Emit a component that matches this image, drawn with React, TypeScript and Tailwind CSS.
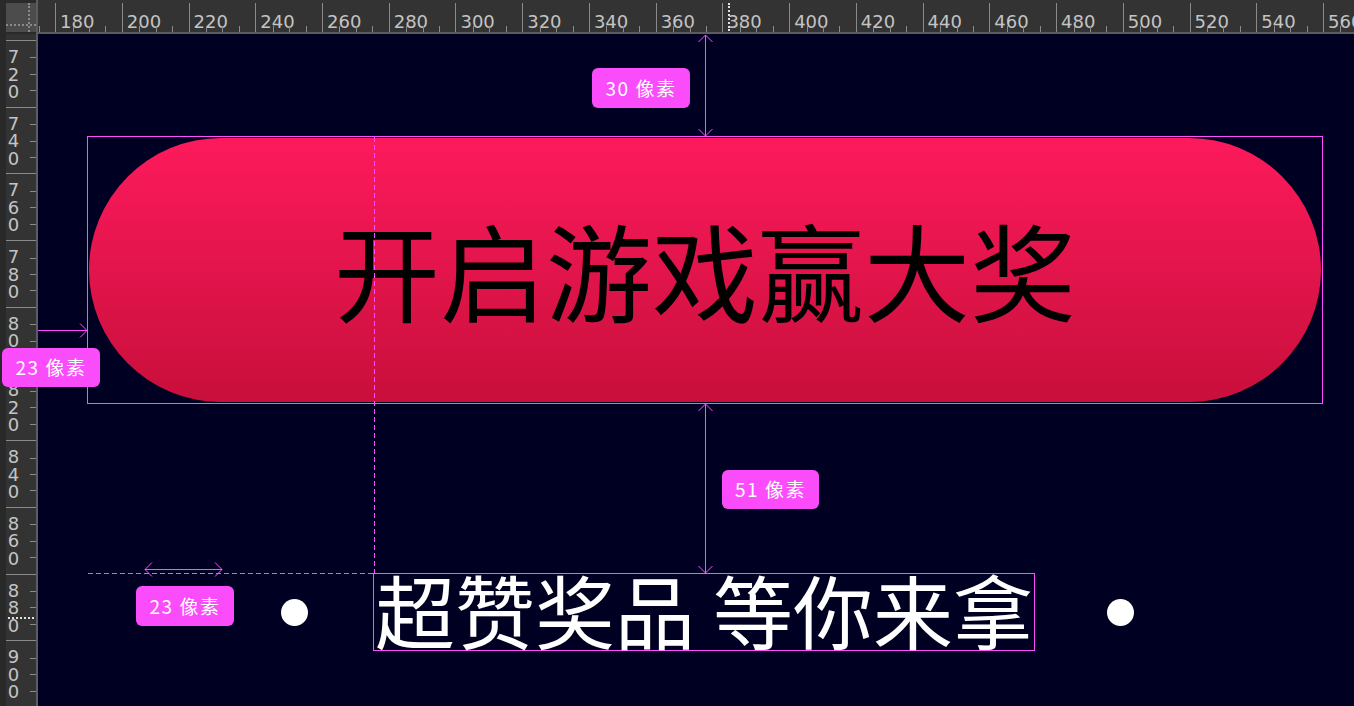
const topMarks = Array.from({ length: 21 }, (_, i) => 160 + i * 20);
const leftMarks = Array.from({ length: 10 }, (_, i) => 720 + i * 20);

const rulerFont = { fontFamily: '"DejaVu Sans", sans-serif' };
const cjk = '"Noto Sans CJK SC", "Noto Sans", sans-serif';

function TopRuler() {
  return (
    <div className="h-full flex-1 overflow-hidden border-b-2 border-[#5c5c5c] bg-[#333333] pt-[3px]">
      <div className="ml-[-49.7px] flex h-full">
        {topMarks.map((n) => (
          <div
            key={n}
            className="flex h-full w-[66.74px] shrink-0 flex-col border-l border-[#8a8a8a]"
          >
            <div className="h-[23px] pl-[4px] pt-[10px]">
              {n > 160 && (
                <span
                  className="block text-[18px] leading-[18px] text-[#c4c4c4]"
                  style={rulerFont}
                >
                  {n}
                </span>
              )}
            </div>
            <div className="flex h-[6px]">
              <div className="w-[16.7px]" />
              <div className="w-[16.7px] border-l border-[#8a8a8a]" />
              <div className="w-[16.7px] border-l border-[#8a8a8a]" />
              <div className="w-[16.6px] border-l border-[#8a8a8a]" />
            </div>
          </div>
        ))}
      </div>
    </div>
  );
}

function LeftRuler() {
  return (
    <div className="flex h-full w-[38px] shrink-0">
      <div className="h-full w-[6px] bg-[#292929]" />
      <div className="h-full w-[32px] overflow-hidden border-r-2 border-[#5c5c5c] bg-[#333333] pt-[6px]">
        {leftMarks.map((n) => (
          <div
            key={n}
            className="flex h-[66.7px] shrink-0 justify-between border-t border-[#8a8a8a]"
          >
            <div
              className="w-[14px] whitespace-pre-line pl-[1px] pt-[7px] text-center text-[18px] leading-[17.5px] text-[#c4c4c4]"
              style={rulerFont}
            >
              {String(n).split("").join("\n")}
            </div>
            <div className="flex w-[6px] flex-col">
              <div className="h-[16.7px]" />
              <div className="h-[16.7px] border-t border-[#8a8a8a]" />
              <div className="h-[16.7px] border-t border-[#8a8a8a]" />
              <div className="h-[16.6px] border-t border-[#8a8a8a]" />
            </div>
          </div>
        ))}
      </div>
    </div>
  );
}

function Label({ text, className }: { text: string; className: string }) {
  return (
    <div
      className={`absolute flex items-center justify-center rounded-[6px] bg-[#fb4cfb] text-[19px] tracking-[1.5px] text-white ${className}`}
      style={{ fontFamily: cjk }}
    >
      {text}
    </div>
  );
}

function Guides() {
  const c = "#ff4dff";
  return (
    <svg
      className="pointer-events-none absolute left-0 top-0"
      width={1354}
      height={706}
      fill="none"
      stroke={c}
      strokeWidth={1}
    >
      {/* 30 px */}
      <path d="M705.5 35V136M698.5 42L705.5 35L712.5 42M698.5 129L705.5 136L712.5 129" />
      {/* 51 px */}
      <path d="M705.5 404V573M698.5 411L705.5 404L712.5 411M698.5 566L705.5 573L712.5 566" />
      {/* left 23 px */}
      <path d="M38 330.5H87M80 323.5L87 330.5L80 337.5" />
      {/* bottom 23 px */}
      <path d="M145 569.5H222M152 562.5L145 569.5L152 576.5M215 562.5L222 569.5L215 576.5" />
      {/* dashed guides */}
      <path d="M374.5 137V573" strokeDasharray="5 3" />
      <path d="M88 573.5H374" strokeDasharray="5 3" />
    </svg>
  );
}

export default function App() {
  return (
    <div className="relative flex h-[706px] w-[1354px] flex-col overflow-hidden bg-[#2a2a2a]">
      <div className="flex h-[34px] shrink-0">
        <div className="h-full w-[38px] shrink-0 border-r-2 border-[#5c5c5c] pl-[6px] pt-[3px]">
          <div className="flex h-[29px] w-[30px] flex-col bg-[#4c4c4c]">
            <div className="flex h-[21px]">
              <div className="w-[22px]" />
              <div className="border-l-2 border-dotted border-[#8a8a8a]" />
            </div>
            <div className="border-t-2 border-dotted border-[#8a8a8a]" />
            <div className="flex flex-1">
              <div className="w-[22px]" />
              <div className="border-l-2 border-dotted border-[#8a8a8a]" />
            </div>
          </div>
        </div>
        <TopRuler />
      </div>

      <div className="flex min-h-0 flex-1">
        <LeftRuler />
        <div className="flex flex-1 flex-col bg-[#000022] pl-[49px] pt-[102px]">
          <div className="h-[268px] w-[1236px] border border-[#ff4dff] p-px">
            <div className="flex h-full w-full items-center justify-center rounded-full bg-linear-to-b from-[#fd1a5c] to-[#c80f3b] pb-[5px]">
              <span
                className="text-[106px] leading-none text-black"
                style={{ fontFamily: cjk }}
              >
                开启游戏赢大奖
              </span>
            </div>
          </div>

          <div className="mt-[169px] flex items-center">
            <div className="ml-[194px] h-[27px] w-[27px] rounded-full bg-white" />
            <div
              className="ml-[65px] whitespace-pre border border-[#ff4dff] px-px pb-[8px] text-[80px] leading-[68px] text-white"
              style={{ fontFamily: cjk }}
            >
              超赞奖品 等你来拿
            </div>
            <div className="ml-[72px] h-[27px] w-[27px] rounded-full bg-white" />
          </div>
        </div>
      </div>

      <Guides />
      <Label text="30 像素" className="left-[592px] top-[68px] h-[40px] w-[98px]" />
      <Label text="51 像素" className="left-[722px] top-[470px] h-[39px] w-[97px]" />
      <Label text="23 像素" className="left-[2px] top-[348px] h-[39px] w-[98px]" />
      <Label text="23 像素" className="left-[136px] top-[586px] h-[40px] w-[98px]" />

      <span className="absolute left-[728px] top-[3px] h-[28px] border-l-2 border-dotted border-[#e0e0e0]" />
      <span className="absolute left-[8px] top-[617px] w-[26px] border-t-2 border-dotted border-[#e0e0e0]" />
    </div>
  );
}
